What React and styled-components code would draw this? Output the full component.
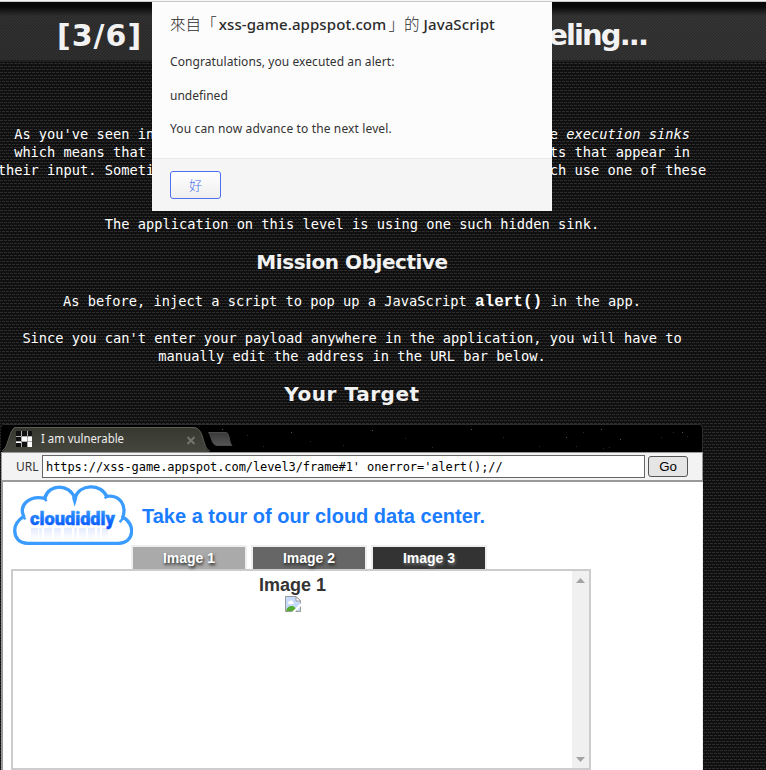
import React from 'react';
import styled, { createGlobalStyle } from 'styled-components';

const Global = createGlobalStyle`
  * { box-sizing: border-box; }
  body { margin: 0; background: #121212; overflow: hidden; }
`;

const MONO = '"DejaVu Sans Mono", monospace';
const UI = '"Noto Sans", "Noto Sans CJK TC", sans-serif';

const Page = styled.div`
  position: relative;
  width: 766px;
  height: 770px;
  overflow: hidden;
  color: #fff;
  background-color: #101010;
  background-image: url("data:image/svg+xml,%3Csvg xmlns='http://www.w3.org/2000/svg' width='4' height='6'%3E%3Cpath d='M0 0h3v1H0zM2 3h2v1H2zM0 3h1v1H0z' fill='%232d2d2d'/%3E%3C/svg%3E");
`;

const ToolbarEdge = styled.div`
  height: 2px;
  background: #f6f6f6;
  border-bottom: 1px solid #c9c9c9;
`;

const Header = styled.header`
  height: 60px;
  padding-right: 62px;
  border-bottom: 2px solid #202020;
  display: flex;
  justify-content: center;
  background:
    linear-gradient(#080808 0, #0a0a0a 5px, rgba(20, 20, 20, 0) 14px),
    repeating-linear-gradient(135deg, rgba(0, 0, 0, 0.22) 0 0.8px, transparent 0.8px 2.12px),
    linear-gradient(#363636, #333);
`;

const Title = styled.h1`
  margin: 0;
  width: 590px;
  display: flex;
  justify-content: space-between;
  font: 700 30px/67px "DejaVu Sans", sans-serif;
  color: #f2f2f2;
  white-space: nowrap;
  span:first-child { letter-spacing: 1px; }
  span:last-child { letter-spacing: -1.9px; font-size: 29px; }
`;

const Article = styled.main`
  width: 704px;
  padding-top: 63px;
  display: flex;
  flex-direction: column;
  align-items: center;
`;

const Paragraph = styled.p`
  margin: 0 0 ${p => p.$gap}px;
  font: 13.7px/18px ${MONO};
  text-align: center;
  white-space: pre;
  code { font: 700 16px/18px "Liberation Mono", monospace; }
`;

const Heading = styled.h2`
  margin: 0 0 ${p => p.$gap}px;
  font: 700 20px/26px "DejaVu Sans", sans-serif;
  letter-spacing: ${p => p.$track}px;
  color: #f2f2f2;
`;

const Browser = styled.section`
  width: 702px;
  height: 346px;
  margin-left: 1px;
  border-top: 1px solid #2c2c2c;
  border-radius: 4px 4px 0 0;
`;

const TabStrip = styled.div`
  height: 27px;
  background: #000;
  border-radius: 4px 4px 0 0;
  border-right: 1px solid #2c2c2c;
  overflow: hidden;
  svg { display: block; }
`;

const AddressBar = styled.form`
  height: 30px;
  padding: 0 14px;
  display: flex;
  align-items: center;
  background: #f3f3f3;
  border: solid #999;
  border-width: 1px 1px 2px;
  color: #333;
  font: 12px ${UI};
`;

const Label = styled.label`
  width: 26px;
`;

const UrlInput = styled.input`
  width: 603px;
  height: 23px;
  padding: 0 3px;
  border: 1px solid #666;
  border-radius: 0;
  background: #fff;
  color: #000;
  font: 12px ${MONO};
  letter-spacing: -0.09px;
`;

const GoButton = styled.button`
  width: 40px;
  height: 21px;
  margin-left: 3px;
  padding: 0;
  border: 1px solid #555;
  border-radius: 3px;
  background: #e5e5e5;
  color: #000;
  font: 13.3px "Liberation Sans", sans-serif;
`;

const Site = styled.div`
  height: 288px;
  padding: 2px 0 0 8px;
  border-left: 2px solid #999;
  border-right: 1px solid #eee;
  background: #fff;
  font-family: "Liberation Sans", sans-serif;
`;

const Banner = styled.div`
  height: 61px;
  display: flex;
  align-items: flex-start;
  gap: 9px;
  color: #1a7cff;
  font-weight: 700;
  font-size: 20px;
  line-height: 64px;
`;

const Tabs = styled.div`
  display: flex;
  gap: 4px;
  padding-left: 120px;
`;

const Tab = styled.button`
  width: 116px;
  height: 24px;
  padding: 0;
  border: solid #eee;
  border-width: 2px 2px 0;
  background: ${p => p.$fill};
  color: #fff;
  font: 700 14px "Liberation Sans", sans-serif;
  text-shadow: 1px 2px 3px ${p => p.$glow};
`;

const Viewer = styled.div`
  width: 580px;
  height: 201px;
  display: flex;
  border: 2px solid #ccc;
`;

const Stage = styled.div`
  flex: 1;
  padding-top: 4px;
  display: flex;
  flex-direction: column;
  align-items: center;
  color: #333;
  font: 700 18px/21px "Liberation Sans", sans-serif;
`;

const Scrollbar = styled.div`
  width: 17px;
  padding: 7px 4px 1px;
  display: flex;
  flex-direction: column;
  justify-content: space-between;
  background: #f0f0f0;
`;

const Dialog = styled.div`
  position: absolute;
  left: 152px;
  top: 2px;
  width: 400px;
  height: 209px;
  display: flex;
  flex-direction: column;
  background: #fcfcfc;
  color: #333;
  font-family: ${UI};
`;

const DialogTitle = styled.h3`
  margin: 9px 18px 17px;
  font: 500 15px/24px ${UI};
  letter-spacing: 0.09px;
  color: #2b2b2b;
  white-space: nowrap;
`;

const Cjk = styled.span`
  margin-right: ${p => p.$after || 0}px;
  margin-left: ${p => p.$before || 0}px;
  font-family: "Noto Sans CJK TC", sans-serif;
  font-weight: 300;
  font-size: 15.5px;
`;

const Message = styled.p`
  margin: 0 18px 16px;
  font: 12px/17.5px ${UI};
  letter-spacing: ${p => p.$track || 0}px;
`;

const DialogFooter = styled.div`
  margin-top: auto;
  height: 53px;
  padding: 12px 18px;
  background: #f5f5f5;
  border-top: 1px solid #e9e9e9;
`;

const OkButton = styled.button`
  width: 51px;
  height: 28px;
  padding: 0;
  display: block;
  border: 1px solid #4c70ee;
  border-radius: 3px;
  background: linear-gradient(#fff, #eee);
  color: #4c70ee;
  font: 300 13px/24px "Noto Sans CJK TC", sans-serif;
`;

const STARS = [[221, 4], [246, 10], [262, 21], [290, 7], [309, 16], [342, 20], [371, 5], [404, 13], [431, 22], [470, 4], [502, 12], [538, 21], [565, 12], [575, 21], [582, 7], [600, 4], [602, 23], [608, 22], [619, 14], [660, 12], [672, 7], [681, 7], [686, 11]];

function TabStripArt() {
  return (
    <svg width="701" height="27">
      <defs>
        <linearGradient id="tab" x2="0" y2="1">
          <stop offset="0" stopColor="#36372f" /><stop offset="1" stopColor="#45463e" />
        </linearGradient>
        <linearGradient id="newtab" x2="0" y2="1">
          <stop offset="0" stopColor="#3a3a3a" /><stop offset="1" stopColor="#555" />
        </linearGradient>
      </defs>
      {STARS.map(([x, y], i) => <rect key={i} x={x} y={y} width="1" height="1" fill={i % 3 ? '#2b2b2b' : '#555'} />)}
      <path d="M1 27C7 24 8 5 14 2H193C204 3 201 24 209 27Z" fill="url(#tab)" />
      <path d="M1 26C7 24 8 5 14 2.500H193C204 3 201 24 209 26" fill="none" stroke="#5c5d54" />
      <path d="M207.500 7.500H225C229 8 228 18 231 20.500H216C210 20 211 11 207.500 7.500Z" fill="url(#newtab)" stroke="#4b4b4b" />
      <rect x="15" y="6" width="16" height="16" fill="#fff" />
      <path d="M15 6h5v5h-5zM21 6h5v5h-5zM27 6h4v5h-4zM15 12h5v4h-5zM21 17h5v5h-5zM15 18h5v4h-5z" fill="#111" />
      <path d="M15 11.500h16M15 16.500h16M20.500 6v16M26.500 6v16" stroke="#777" strokeWidth=".6" />
      <text x="40" y="18" fontFamily="Noto Sans" fontSize="12" fill="#eee" textLength="83" lengthAdjust="spacingAndGlyphs">I am vulnerable</text>
      <path d="M186.500 12l7 7M193.500 12l-7 7" stroke="#74756d" strokeWidth="2" />
    </svg>
  );
}

const ECHO = [[20, 7], [28, 3], [33, 8], [43, 7], [53, 8], [63, 3], [68, 7], [77, 7], [86, 3], [91, 6]];

function CloudLogo() {
  return (
    <svg width="122" height="62" viewBox="0 0 122 62">
      <defs>
        <linearGradient id="word" gradientUnits="userSpaceOnUse" x1="0" y1="24" x2="0" y2="44">
          <stop offset="0" stopColor="#38a2ff" /><stop offset="1" stopColor="#0050ff" />
        </linearGradient>
        <linearGradient id="echo" x2="0" y2="1">
          <stop offset="0" stopColor="#c9d6fd" stopOpacity=".5" /><stop offset="1" stopColor="#d9e2fe" stopOpacity="0" />
        </linearGradient>
      </defs>
      <g transform="translate(.7 .3)">
        <path d="M16 59C7 59 3 53 3 46C3 40 6 36 12 32C7 21 17 11 33 14C37 -1 58 -1 63 14C68 -1 89 -1 95 12C109 10 115 22 111 33C124 39 123 59 107 59Z" fill="#fff" stroke="#3a9cff" strokeWidth="3.300" strokeLinejoin="round" />
        <path d="M33 13L34.500 17M61.500 13L63 18L64.500 13M11 31L13.500 35M112 33L108 38M96 11L93 14" fill="none" stroke="#3a9cff" strokeWidth="2.500" />
      </g>
      {ECHO.map(([x, w]) => <rect key={x} x={x} y="44" width={w} height="13" fill="url(#echo)" />)}
      <text x="19" y="41" fontFamily="Roboto" fontWeight="900" fontSize="19" textLength="85" lengthAdjust="spacingAndGlyphs" fill="url(#word)" stroke="url(#word)" strokeWidth=".5">cloudiddly</text>
    </svg>
  );
}

function BrokenImage() {
  return (
    <svg width="16" height="16">
      <path d="M.5 .5H11L15.500 5V15.500H.5Z" fill="#c6dafb" stroke="#9a9a9a" />
      <path d="M11 .5V5H15.500Z" fill="#fff" stroke="#9a9a9a" />
      <path d="M3 7Q3 5 5 5Q7 3 8 6Q10 7 8 8H4Z" fill="#fff" />
      <path d="M1 15Q2 10 7 10Q10 10 12 15Z" fill="#52ad32" />
      <path d="M16 7L7 16H10L16 10Z" fill="#fff" />
    </svg>
  );
}

const TABS = [['Image 1', '#aaa', '#222'], ['Image 2', '#666', '#222'], ['Image 3', '#333', '#777']];

export default function App() {
  return (
    <Page>
      <Global />
      <ToolbarEdge />
      <Header>
        <Title><span>[3/6]</span><span>That sinking feeling...</span></Title>
      </Header>
      <Article>
        <Paragraph $gap={18}>
          {"As you've seen in the previous level, some common JS functions are "}<em>execution sinks</em>
          {'\nwhich means that they will cause the browser to execute any scripts that appear in\ntheir input. Sometimes this fact is hidden by higher-level APIs which use one of these\nfunctions under the hood.'}
        </Paragraph>
        <Paragraph $gap={16}>The application on this level is using one such hidden sink.</Paragraph>
        <Heading $gap={17} $track={-0.45}>Mission Objective</Heading>
        <Paragraph $gap={18}>As before, inject a script to pop up a JavaScript <code>alert()</code> in the app.</Paragraph>
        <Paragraph $gap={16}>{"Since you can't enter your payload anywhere in the application, you will have to\nmanually edit the address in the URL bar below."}</Paragraph>
        <Heading $gap={17} $track={0.55}>Your Target</Heading>
      </Article>
      <Browser>
        <TabStrip><TabStripArt /></TabStrip>
        <AddressBar onSubmit={e => e.preventDefault()}>
          <Label htmlFor="url">URL</Label>
          <UrlInput id="url" defaultValue="https://xss-game.appspot.com/level3/frame#1' onerror='alert();//" />
          <GoButton>Go</GoButton>
        </AddressBar>
        <Site>
          <Banner><CloudLogo />Take a tour of our cloud data center.</Banner>
          <Tabs>{TABS.map(([name, fill, glow]) => <Tab key={name} $fill={fill} $glow={glow}>{name}</Tab>)}</Tabs>
          <Viewer>
            <Stage>Image 1<BrokenImage /></Stage>
            <Scrollbar>
              <svg width="9" height="5"><path d="M0 5L4.500 0L9 5Z" fill="#a3a3a3" /></svg>
              <svg width="9" height="10"><path d="M0 0L4.500 5L9 0Z" fill="#a3a3a3" /></svg>
            </Scrollbar>
          </Viewer>
        </Site>
      </Browser>
      <Dialog role="alertdialog">
        <DialogTitle><Cjk $after={2}>來自「</Cjk>xss-game.appspot.com<Cjk $before={2}>」的</Cjk> JavaScript</DialogTitle>
        <Message $track={0.08}>Congratulations, you executed an alert:</Message>
        <Message>undefined</Message>
        <Message $track={0.13}>You can now advance to the next level.</Message>
        <DialogFooter><OkButton>好</OkButton></DialogFooter>
      </Dialog>
    </Page>
  );
}
